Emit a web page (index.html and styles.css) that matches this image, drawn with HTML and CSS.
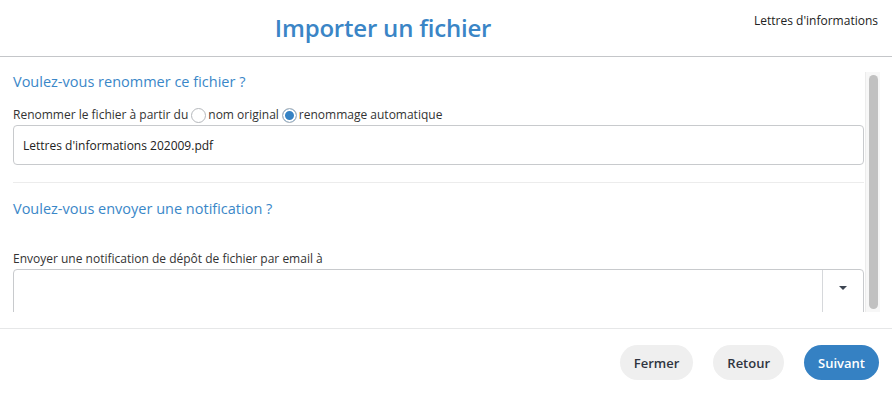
FILE: index.html
```html
<!DOCTYPE html>
<html lang="fr">

<head>
    <meta charset="UTF-8">
    <meta name="viewport" content="width=device-width, initial-scale=1.0">
    <title>Importer un fichier</title>
    <link rel="stylesheet" href="styles.css">
</head>

<body>
    <div id="modal">
        <div id="header">
            <h1>Importer un fichier</h1>
            <span class="folder">Lettres d'informations</span>
        </div>

        <div id="body">
            <div id="content">
                <div class="section">
                    <h2>Voulez-vous renommer ce fichier ?</h2>
                    <div class="label">
                        Renommer le fichier à partir du
                        <label class="choice"><input type="radio" name="rename" value="original">nom original</label>
                        <label class="choice"><input type="radio" name="rename" value="auto" checked>renommage automatique</label>
                    </div>
                    <input type="text" class="field" value="Lettres d'informations 202009.pdf">
                </div>

                <div class="section notif">
                    <h2>Voulez-vous envoyer une notification ?</h2>
                    <div class="label spaced">Envoyer une notification de dépôt de fichier par email à</div>
                    <div class="picker">
                        <div class="picker_value"></div>
                        <div class="picker_toggle"><span class="caret"></span></div>
                    </div>
                </div>
            </div>
            <div class="scrollbar"><div class="thumb"></div></div>
        </div>

        <div id="footer">
            <button class="btn">Fermer</button>
            <button class="btn">Retour</button>
            <button class="btn primary">Suivant</button>
        </div>
    </div>
</body>

</html>
```

FILE: styles.css
```css
body {
    margin: 0;
    font-family: "Open Sans", "Liberation Sans", sans-serif;
    font-size: 12px;
    color: #333;
    background: #fff;
}

#modal {
    width: 892px;
    height: 396px;
    display: flex;
    flex-direction: column;
}

#header {
    height: 56px;
    display: flex;
    align-items: center;
    padding-left: 12px;
    border-bottom: 1px solid #c4c6c9;
}

h1 {
    flex: 1;
    margin: 0;
    margin-top: -2px;
    text-align: center;
    font-size: 24px;
    font-weight: 600;
    color: #3a85c6;
    letter-spacing: -0.2px;
}

.folder {
    align-self: flex-start;
    margin-top: 12px;
    padding-right: 14px;
    font-size: 12px;
    color: #222;
}

#body {
    height: 240px;
    margin-top: 15px;
    margin-right: 12px;
    display: flex;
}

#content {
    flex: 1;
    padding-left: 13px;
    padding-right: 1px;
    overflow: hidden;
}

.scrollbar {
    width: 15px;
    box-sizing: border-box;
    background: #f7f7f7;
    border-left: 1px solid #ececec;
    padding: 3px 2px 3px 3px;
}

.thumb {
    height: 100%;
    background: #c1c1c1;
    border-radius: 5px;
}

h2 {
    margin: 0;
    font-size: 14.5px;
    line-height: 20px;
    font-weight: 400;
    color: #3a87c8;
}

.section {
    padding-bottom: 17px;
    border-bottom: 1px solid #ececec;
}

.label {
    margin-top: 14px;
    line-height: 18px;
    display: flex;
    align-items: center;
    gap: 3px;
}

.label.spaced {
    margin-top: 31px;
}

.choice {
    display: flex;
    align-items: center;
    gap: 2px;
}

.choice input {
    appearance: none;
    -webkit-appearance: none;
    width: 15px;
    height: 15px;
    margin: 0;
    border: 1px solid #b5b8bc;
    border-radius: 50%;
    background: #fff;
}

.choice input:checked {
    background: #3582c4;
    box-shadow: inset 0 0 0 2px #fff;
}

.field {
    display: block;
    width: 100%;
    box-sizing: border-box;
    height: 40px;
    margin-top: 1px;
    padding: 0 9px;
    border: 1px solid #c8cacd;
    border-radius: 4px;
    font-family: "Open Sans", "Liberation Sans", sans-serif;
    font-size: 12px;
    color: #222;
}

.notif {
    border-bottom: none;
    padding-top: 16px;
}

.picker {
    display: flex;
    height: 46px;
    margin-top: 1px;
    border: 1px solid #c8cacd;
    border-radius: 4px;
}

.picker_value {
    flex: 1;
}

.picker_toggle {
    width: 41px;
    border-left: 1px solid #d6d8db;
    display: flex;
    justify-content: center;
    padding-top: 16px;
    box-sizing: border-box;
}

.caret {
    width: 0;
    height: 0;
    border-left: 4px solid transparent;
    border-right: 4px solid transparent;
    border-top: 4px solid #3d4552;
}

#footer {
    margin-top: 16px;
    border-top: 1px solid #e6e7e8;
    display: flex;
    justify-content: flex-end;
    gap: 20px;
    padding: 16px 13px 0 0;
}

.btn {
    height: 35px;
    padding: 0 14px;
    border: none;
    border-radius: 18px;
    background: #efefef;
    color: #2f3540;
    font-family: "Open Sans", "Liberation Sans", sans-serif;
    font-size: 13px;
    font-weight: 600;
    cursor: pointer;
}

.btn.primary {
    background: #3581c3;
    color: #fff;
}
```
